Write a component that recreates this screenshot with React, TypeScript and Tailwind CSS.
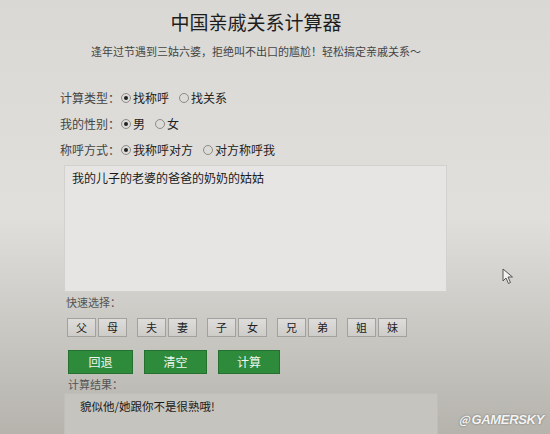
import React from 'react';

const cjk = { fontFamily: '"Noto Sans CJK SC", "Noto Sans", sans-serif' };

const Radio = ({ checked }: { checked?: boolean }) => (
  <span className="inline-flex h-[10px] w-[10px] items-center justify-center rounded-full border border-[#8d8c89] bg-[#dcdbd8] mr-[2px]">
    {checked && <span className="h-[4px] w-[4px] rounded-full bg-[#222]" />}
  </span>
);

const rows = [
  { label: '计算类型：', options: ['找称呼', '找关系'] },
  { label: '我的性别：', options: ['男', '女'] },
  { label: '称呼方式：', options: ['我称呼对方', '对方称呼我'] },
];

const quickPairs = [
  ['父', '母'],
  ['夫', '妻'],
  ['子', '女'],
  ['兄', '弟'],
  ['姐', '妹'],
];

export default function App() {
  return (
    <div
      style={cjk}
      className="relative h-[434px] w-[550px] overflow-hidden bg-linear-to-b from-[#d9d8d4] via-[#e0dfdc] to-[#b5b3ac] text-[#333]"
    >
      <div className="w-[512px] text-center">
        <h1 className="mt-[9px] text-[19px] leading-[26px] text-[#1e1e1e]">中国亲戚关系计算器</h1>
        <p className="mt-[8px] text-[11px] leading-[16px] text-[#444]">
          逢年过节遇到三姑六婆，拒绝叫不出口的尴尬！轻松搞定亲戚关系～
        </p>
      </div>

      <div className="mt-[26px] pl-[60px]">
        {rows.map((row) => (
          <div key={row.label} className="flex h-[26px] items-center text-[12px] text-[#444]">
            <span className="w-[61px]">{row.label}</span>
            {row.options.map((opt, i) => (
              <label key={opt} className={`flex items-center ${i === 0 ? 'mr-[10px]' : ''}`}>
                <Radio checked={i === 0} />
                <span className="text-[#222]">{opt}</span>
              </label>
            ))}
          </div>
        ))}
      </div>

      <div className="ml-[64px] mt-[2px] h-[127px] w-[383px] border border-[#d3d1cd] bg-[#e6e5e3] px-[7px] py-[4px] text-[12px] leading-[16px] text-[#1a1a1a]">
        我的儿子的老婆的爸爸的奶奶的姑姑
      </div>

      <div className="ml-[66px] mt-[3px] h-[14px] text-[11px] leading-[14px] text-[#555]">快速选择：</div>

      <div className="ml-[67px] mt-[9px] flex gap-[10px]">
        {quickPairs.map((pair) => (
          <div key={pair[0]} className="flex gap-[2px]">
            {pair.map((ch) => (
              <button
                key={ch}
                className="flex h-[19px] w-[29px] items-center justify-center border border-[#a3a19d] bg-linear-to-b from-[#dedddb] to-[#cdccc9] text-[11px] text-[#222]"
              >
                {ch}
              </button>
            ))}
          </div>
        ))}
      </div>

      <div className="ml-[68px] mt-[13px] flex gap-[11px]">
        {['回退', '清空', '计算'].map((t, i) => (
          <button
            key={t}
            className={`flex h-[24px] items-center justify-center border border-[#26702f] bg-[#2f8b3c] text-[12px] text-[#eef6ef] ${
              i === 0 ? 'w-[65px]' : i === 1 ? 'w-[63px]' : 'w-[62px]'
            }`}
          >
            {t}
          </button>
        ))}
      </div>

      <div className="ml-[68px] mt-[3px] h-[14px] text-[11px] leading-[14px] text-[#555]">计算结果：</div>

      <div className="ml-[64px] mt-[2px] h-[60px] w-[374px] border border-[#c0beb9] bg-[#c6c4bf] px-[15px] py-[4px] text-[11.5px] leading-[16px] text-[#1a1a1a]">
        貌似他/她跟你不是很熟哦!
      </div>

      {/* mouse pointer */}
      <svg className="absolute left-[502px] top-[268px]" width="12" height="17" viewBox="0 0 12 17">
        <path d="M1 1 L1 13 L4 10 L6.5 15.5 L8.5 14.5 L6 9 L10.5 9 Z" fill="#f2f1ef" stroke="#555" strokeWidth="1" />
      </svg>

      <div className="absolute bottom-[5px] right-[6px] flex items-center gap-[2px] text-[13px] font-bold italic tracking-tight text-[#f4f4f2] [text-shadow:0_0_2px_#666]">
        <span className="text-[11px]">@</span>
        <span style={{ fontFamily: '"Liberation Sans", sans-serif' }}>GAMERSKY</span>
      </div>
    </div>
  );
}
